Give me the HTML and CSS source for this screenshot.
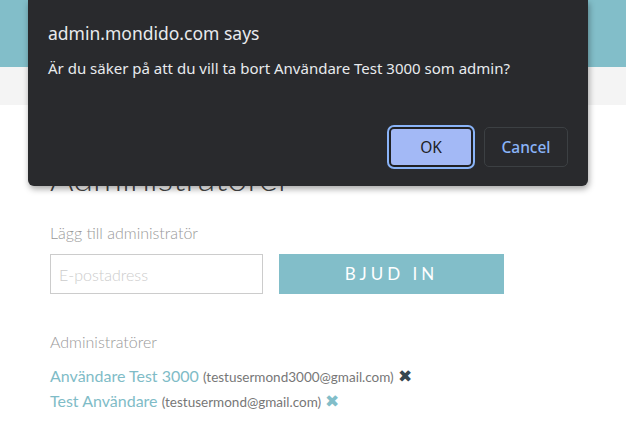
FILE: index.html
```html
<!DOCTYPE html>
<html lang="sv">
<head>
    <meta charset="UTF-8">
    <meta name="viewport" content="width=device-width, initial-scale=1.0">
    <title>Administratörer</title>
    <link rel="stylesheet" href="styles.css">
</head>
<body>

    <!-- Toppmeny -->
    <header class="topbar"></header>
    <nav class="subbar"></nav>

    <main class="content">
        <h1 class="page-title">Administratörer</h1>

        <p class="label">Lägg till administratör</p>
        <form class="invite-form">
            <input type="text" class="email-input" placeholder="E-postadress">
            <button type="button" class="invite-btn">BJUD IN</button>
        </form>

        <p class="label list-label">Administratörer</p>
        <ul class="admin-list">
            <li>
                <a href="#" class="admin-name">Användare Test 3000</a>
                <span class="admin-email">(testusermond3000@gmail.com)</span>
                <span class="remove remove-active">&#x2716;</span>
            </li>
            <li>
                <a href="#" class="admin-name">Test Användare</a>
                <span class="admin-email">(testusermond@gmail.com)</span>
                <span class="remove">&#x2716;</span>
            </li>
        </ul>
    </main>

    <!-- Bekräftelsedialog från webbläsaren -->
    <div class="dialog">
        <div class="dialog-title">admin.mondido.com says</div>
        <div class="dialog-message">Är du säker på att du vill ta bort Användare Test 3000 som admin?</div>
        <div class="dialog-buttons">
            <button class="btn-ok">OK</button>
            <button class="btn-cancel">Cancel</button>
        </div>
    </div>

</body>
</html>
```

FILE: styles.css
```css
body {
    margin: 0;
    padding: 0;
    background-color: #ffffff;
    font-family: "Open Sans", "Noto Sans", sans-serif;
}

.topbar {
    height: 67px;
    background-color: #82bec9;
}

.subbar {
    height: 38px;
    background-color: #f4f4f4;
}

.content {
    padding: 52px 50px 0 50px;
}

.page-title {
    margin: 0 0 26px 0;
    font-family: Lato, sans-serif;
    font-weight: 300;
    font-size: 36px;
    line-height: 40px;
    color: #444;
}

.label {
    margin: 0 0 12px 0;
    font-family: Lato, sans-serif;
    font-weight: 300;
    font-size: 16px;
    color: #999;
}

.invite-form {
    display: flex;
    align-items: center;
    gap: 16px;
    margin: 0;
}

.email-input {
    width: 213px;
    height: 40px;
    box-sizing: border-box;
    border: 1px solid #ccc;
    padding: 0 8px;
    font-family: Lato, sans-serif;
    font-weight: 300;
    font-size: 16px;
    color: #555;
    outline: none;
}

.email-input::placeholder {
    color: #ccc;
}

.invite-btn {
    width: 225px;
    height: 40px;
    margin-top: -1px;
    border: none;
    background-color: #82bec9;
    color: #fff;
    font-family: Lato, sans-serif;
    font-size: 17px;
    letter-spacing: 4px;
    cursor: pointer;
}

.list-label {
    margin-top: 38px;
    margin-bottom: 12px;
}

.admin-list {
    list-style-type: none;
    margin: 0;
    padding: 0;
}

.admin-list li {
    height: 25px;
    line-height: 25px;
}

.admin-name {
    font-family: Lato, sans-serif;
    font-size: 16px;
    color: #7fbcc7;
    text-decoration: none;
}

.admin-email {
    font-family: Lato, sans-serif;
    font-size: 13.5px;
    color: #777;
}

.remove {
    font-size: 17px;
    color: #82bec9;
    cursor: pointer;
}

.remove-active {
    color: #37474f;
}

/* dialog */

.dialog {
    position: absolute;
    top: 0;
    left: 28px;
    width: 560px;
    height: 186px;
    box-sizing: border-box;
    padding: 21px 20px 0 20px;
    background-color: #292a2d;
    border-radius: 0 0 6px 6px;
    box-shadow: 1px 3px 6px rgba(0, 0, 0, 0.35);
    font-family: "Noto Sans", sans-serif;
}

.dialog-title {
    font-size: 17.5px;
    color: #e8eaed;
    margin-bottom: 13px;
}

.dialog-message {
    font-size: 15px;
    color: #e8eaed;
}

.dialog-buttons {
    display: flex;
    justify-content: flex-end;
    gap: 11px;
    margin-top: 49px;
}

.dialog-buttons button {
    width: 84px;
    height: 40px;
    border-radius: 5px;
    font-family: "Noto Sans", sans-serif;
    font-size: 15.5px;
}

.btn-ok {
    background-color: #a3b9f6;
    color: #202124;
    border: 2px solid #202124;
    box-shadow: 0 0 0 2px #8ab4f8;
}

.btn-cancel {
    background-color: #292a2d;
    color: #8ab4f8;
    font-weight: 500;
    border: 1px solid #3c4043;
}
```
